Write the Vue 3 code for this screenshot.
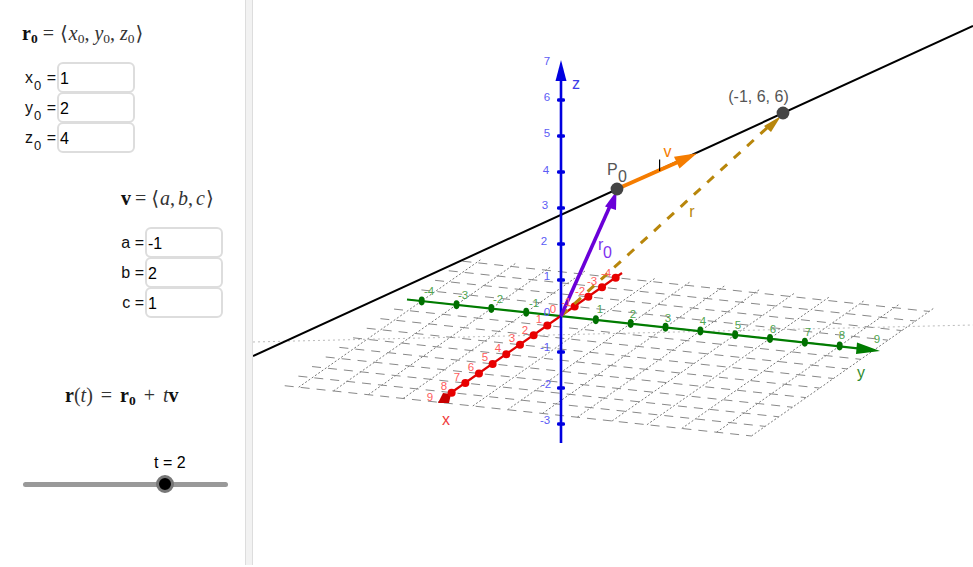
<template>
  <div class="applet">
    <aside class="panel">
      <div class="math math-r0">
        <b>r<sub>0</sub></b><span class="eq">=</span><span class="br">⟨</span><i>x</i><sub>0</sub>,<i class="gap">y</i><sub>0</sub>,<i class="gap">z</i><sub>0</sub><span class="br">⟩</span>
      </div>

      <div class="inputs inputs-start">
        <div v-for="f in startFields" :key="f.name" class="field">
          <label>{{ f.name }}<sub>0</sub> =</label>
          <div class="box">{{ f.value }}</div>
        </div>
      </div>

      <div class="math math-v">
        <b>v</b><span class="eq">=</span><span class="br">⟨</span><i>a</i>,<i class="gap">b</i>,<i class="gap">c</i><span class="br">⟩</span>
      </div>

      <div class="inputs inputs-dir">
        <div v-for="f in dirFields" :key="f.name" class="field">
          <label>{{ f.name }} =</label>
          <div class="box">{{ f.value }}</div>
        </div>
      </div>

      <div class="math math-rt">
        <b>r</b>(<i>t</i>)<span class="eq">=</span><b>r<sub>0</sub></b><span class="eq">+</span><i>t</i><b>v</b>
      </div>

      <div class="slider">
        <div class="slider-label">t = 2</div>
        <div class="track"><span class="thumb"></span></div>
      </div>
    </aside>

    <div class="divider"></div>

    <svg class="view" viewBox="253 0 720 567" width="720" height="567">
      <!-- xy plane grid -->
      <g>
        <line v-for="(l, i) in gridDotted" :key="'a' + i" :x1="l[0]" :y1="l[1]" :x2="l[2]" :y2="l[3]" stroke="#777" stroke-width="1" stroke-dasharray="2 2" />
        <line v-for="(l, i) in gridDashed" :key="'b' + i" :x1="l[0]" :y1="l[1]" :x2="l[2]" :y2="l[3]" stroke="#888" stroke-width="1" stroke-dasharray="9 7" />
      </g>
      <line x1="253" y1="342" x2="973" y2="325" stroke="#bbb" stroke-width="1" stroke-dasharray="2 3" />

      <!-- black line -->
      <line x1="253" y1="356" x2="973" y2="26" stroke="#000" stroke-width="2" />

      <!-- y axis -->
      <line x1="407" y1="299.5" x2="860" y2="348.6" stroke="#007c00" stroke-width="2.2" />
      <polygon points="880,351 857,342.5 856,354" fill="#007c00" />
      <ellipse v-for="t in yTicks" :key="'yt' + t" :cx="P(0, t)[0]" :cy="P(0, t)[1]" rx="3" ry="4.4" fill="#007000" />

      <!-- x axis -->
      <line x1="622" y1="273" x2="445" y2="397" stroke="#e00000" stroke-width="2.2" />
      <polygon points="438,403 449,403 451,394 443,393" fill="#c80000" />
      <circle v-for="t in xTicks" :key="'xt' + t" :cx="P(t, 0)[0]" :cy="P(t, 0)[1]" r="4" fill="#e80000" />

      <!-- z axis -->
      <line x1="561" y1="443" x2="561" y2="78" stroke="#0000e0" stroke-width="2.6" />
      <polygon points="561,60 555.5,81 566.5,81" fill="#0000e0" />
      <rect v-for="t in zTicks" :key="'zt' + t" :x="557" :y="316 - t * 36 - 1.8" width="8" height="3.6" rx="1.4" fill="#0000e0" />

      <!-- r vector -->
      <line x1="561" y1="316" x2="768" y2="127" stroke="#b8860b" stroke-width="3" stroke-dasharray="9 9" />
      <polygon points="781,116 764,126 771,132" fill="#b8860b" />

      <!-- r0 vector -->
      <line x1="561" y1="316" x2="610" y2="206" stroke="#6a00d8" stroke-width="3.6" />
      <polygon points="616.5,191 605,206.5 616,210" fill="#6a00d8" />

      <!-- v vector -->
      <line x1="617" y1="189" x2="678" y2="162" stroke="#f57c00" stroke-width="4" />
      <polygon points="697,153.3 674,156.7 679.5,168.5" fill="#f57c00" />
      <line x1="659.6" y1="159.5" x2="659.6" y2="171" stroke="#000" stroke-width="1.2" />

      <circle cx="617" cy="189" r="6.4" fill="#444" />
      <circle cx="783" cy="113" r="6.4" fill="#444" />

      <!-- tick labels -->
      <g class="num">
        <text v-for="l in zLabels" :key="'zl' + l[0]" :x="l[1]" :y="l[2]" fill="#5c5cf5" text-anchor="middle">{{ l[0] }}</text>
        <text v-for="l in yLabels" :key="'yl' + l[0]" :x="l[1]" :y="l[2]" fill="#4fa44f" text-anchor="middle">{{ l[0] }}</text>
        <text v-for="l in xLabels" :key="'xl' + l[0]" :x="l[1]" :y="l[2]" fill="#ff5c5c" text-anchor="middle">{{ l[0] }}</text>
      </g>

      <!-- names -->
      <g class="name">
        <text x="576" y="89" fill="#3c3ce8" text-anchor="middle">z</text>
        <text x="446" y="425" fill="#f03c3c" text-anchor="middle">x</text>
        <text x="861" y="378" fill="#2e8b2e" text-anchor="middle">y</text>
        <text x="667.5" y="157" fill="#f57c00" text-anchor="middle">v</text>
        <text x="692" y="217" fill="#b8860b" text-anchor="middle">r</text>
        <text x="598" y="250" fill="#8030f0">r</text>
        <text x="603" y="258" fill="#8030f0">0</text>
        <text x="607" y="175" fill="#555">P</text>
        <text x="618" y="182" fill="#555">0</text>
        <text x="758.5" y="102" fill="#555" text-anchor="middle">(-1, 6, 6)</text>
      </g>
    </svg>
  </div>
</template>

<script setup>
const startFields = [
  { name: 'x', value: '1' },
  { name: 'y', value: '2' },
  { name: 'z', value: '4' }
]
const dirFields = [
  { name: 'a', value: '-1' },
  { name: 'b', value: '2' },
  { name: 'c', value: '1' }
]

// projection of the xy plane onto the view
const P = (x, y) => [561 - 13.67 * x + 34.83 * y, 316 + 9.58 * x + 3.75 * y]

const lo = -4.4
const hi = 9
const gridDotted = []
const gridDashed = []
for (let i = -4; i <= 9; i++) {
  gridDotted.push([...P(hi, i), ...P(lo, i)])
  gridDashed.push([...P(i, lo), ...P(i, hi)])
}

const yTicks = [-4, -3, -2, -1, 1, 2, 3, 4, 5, 6, 7, 8]
const xTicks = [-4, -3, -2, -1, 1, 2, 3, 4, 5, 6, 7, 8]
const zTicks = [-3, -2, -1, 1, 2, 3, 4, 5, 6]

const zLabels = [
  [7, 547, 65], [6, 547, 101], [5, 547, 137], [4, 546, 174], [3, 545, 209], [2, 544, 245],
  [1, 547, 280], [0, 547, 316], [-1, 545, 351], [-2, 546, 388], [-3, 545, 424]
]
const yLabels = [
  [-4, 429, 295], [-3, 463, 299], [-2, 498, 303], [-1, 534, 307], [1, 600, 313], [2, 633, 318],
  [3, 668, 322], [4, 703, 325], [5, 738, 329], [6, 773, 333], [7, 808, 336], [8, 842, 339], [9, 877, 343]
]
const xLabels = [
  [-4, 606, 277], [-3, 592, 285], [-2, 580, 295], [-1, 566, 306], [0, 553, 313], [1, 539, 323],
  [2, 525, 334], [3, 512, 342], [4, 498, 352], [5, 485, 361], [6, 471, 371], [7, 457, 381], [8, 444, 390], [9, 430, 401]
]
</script>

<style scoped>
.applet { display: flex; width: 973px; height: 567px; background: #fff; overflow: hidden; font-family: "Liberation Sans", Arial, sans-serif; color: #000; }
.panel { width: 245px; flex: none; display: flex; flex-direction: column; }
.divider { width: 8px; height: 565px; flex: none; background: #f2f2f2; border-left: 1px solid #ddd; border-right: 1px solid #ddd; box-sizing: border-box; }
.view { display: block; flex: none; }

.math { height: 24px; line-height: 24px; font-family: "Liberation Serif", "DejaVu Serif", serif; font-size: 20px; color: #333; white-space: nowrap; }
.math sub { font-size: 13.5px; line-height: 0; vertical-align: -3px; }
.math b { font-weight: 700; color: #111; }
.math .eq { margin: 0 5px; }
.math .gap { margin-left: 5px; }
.math .br { font-family: "DejaVu Sans", serif; font-size: 20px; margin: 0 1px; }
.math-r0 { margin: 21px 0 0 22px; }
.math-v { margin: 34px 0 0 121px; }
.math-v .eq { margin: 0 4px; }
.math-v .gap { margin-left: 3px; }
.math-rt { margin: 66px 0 0 65px; }
.math-rt .eq { margin: 0 8px; }

.inputs { display: flex; flex-direction: column; }
.inputs-start { margin-top: 17px; padding-left: 57px; }
.inputs-dir { margin-top: 17px; padding-left: 145px; }
.field { position: relative; height: 30px; }
.field label { position: absolute; right: 100%; top: 8px; margin-right: 1px; font-size: 16px; line-height: 16px; white-space: nowrap; color: #111; }
.field label sub { font-size: 13px; line-height: 0; vertical-align: -7px; margin: 0 1px; }
.box { box-sizing: border-box; width: 78px; height: 31px; border: 2px solid #ddd; border-radius: 6px; padding: 0 0 0 1px; font-size: 16px; line-height: 29px; background: #fff; }

.slider { margin: 48px 0 0 23px; width: 205px; }
.slider-label { font-size: 16px; line-height: 16px; padding-left: 131px; }
.track { position: relative; height: 5px; border-radius: 3px; background: #999; margin-top: 11px; }
.thumb { position: absolute; left: 133px; top: -7px; width: 18px; height: 18px; box-sizing: border-box; border-radius: 50%; background: #000; border: 3px solid #777; }

.num text { font-family: "Liberation Sans", Arial, sans-serif; font-size: 11.5px; }
.name text { font-family: "Liberation Sans", Arial, sans-serif; font-size: 16px; }
</style>
